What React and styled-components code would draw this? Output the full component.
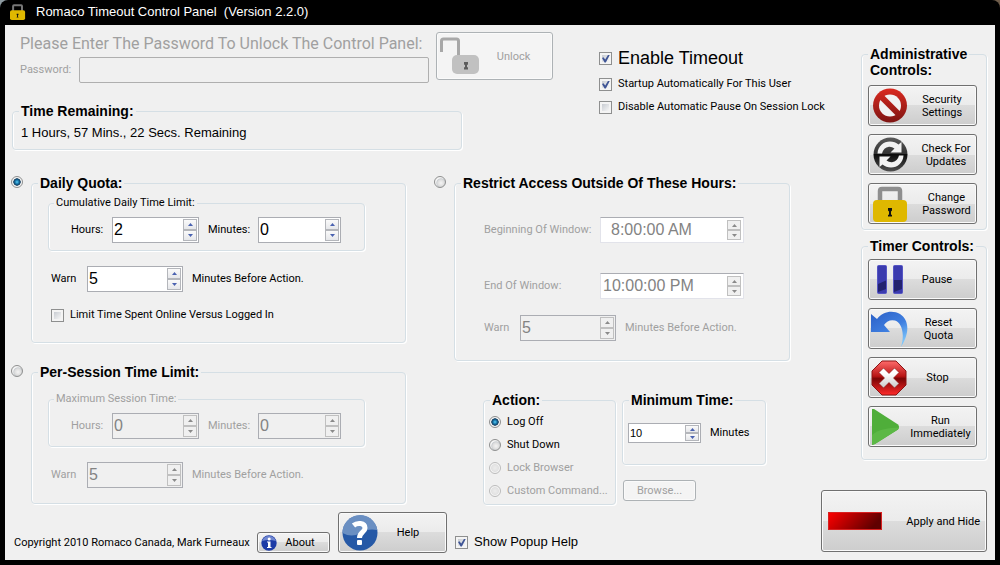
import React from "react";
import styled, { createGlobalStyle, css } from "styled-components";

const GlobalStyle = createGlobalStyle`
  *, *::before, *::after { box-sizing: border-box; }
  body {
    margin: 0;
    background: linear-gradient(90deg, #8d9aa0, #6e5c4a);
    font-family: Roboto, "Liberation Sans", Arial, sans-serif;
    font-size: 11px;
    line-height: 14px;
    color: #000;
  }
`;

const wideFont = css`
  font-family: "Liberation Sans", Arial, sans-serif;
`;

const Window = styled.main`
  min-height: 100vh;
  display: flex;
  flex-direction: column;
  padding: 0 5px 5px;
  background: #000;
  border-radius: 8px 8px 0 0;
`;

const TitleBar = styled.header`
  display: flex;
  align-items: center;
  gap: 10px;
  height: 25px;
  padding: 0 5px 2px;
  color: #fff;
`;

const Title = styled.h1`
  ${wideFont}
  margin: 0;
  font-size: 13px;
  line-height: 16px;
  font-weight: 400;
  white-space: pre;
`;

const Client = styled.div`
  flex: 1;
  display: flex;
  padding-right: 8px;
  background: #f0f0f0;
`;

const Content = styled.div`
  flex: 1;
  min-width: 0;
  padding: 7px 0 7px 6px;
`;

const TopArea = styled.div`
  display: flex;
  gap: 46px;
  padding-left: 1px;
`;

const TopLeft = styled.div`
  flex: none;
  width: 541px;
`;

const PasswordRow = styled.div`
  display: flex;
  gap: 7px;
  padding-left: 8px;
`;

const PasswordBlock = styled.div`
  flex: 1;
  min-width: 0;
  padding-top: 2px;
`;

const PasswordTitle = styled.h2`
  margin: 0 0 3px;
  font-size: 16px;
  line-height: 20px;
  font-weight: 400;
  color: #a0a0a0;
  white-space: nowrap;
`;

const Row = styled.div`
  display: flex;
  align-items: center;
  padding-left: ${(p) => p.$indent || 0}px;
  margin-top: ${(p) => p.$top || 0}px;
`;

const FieldLabel = styled.label`
  flex: none;
  width: ${(p) => (p.$width ? p.$width + "px" : "auto")};
  padding-left: ${(p) => (p.$after ? 9 : 0)}px;
  color: ${(p) => (p.$off ? "#a0a0a0" : "#000")};
  white-space: nowrap;
`;

const Note = styled.span`
  padding-left: 9px;
  color: ${(p) => (p.$off ? "#a0a0a0" : "#000")};
  white-space: nowrap;
`;

const PasswordInput = styled.input`
  flex: 1;
  min-width: 0;
  height: 26px;
  border: 1px solid #afafaf;
  border-radius: 2px;
  background: #f0f0f0;
`;

const OptionColumn = styled.div`
  display: flex;
  flex-direction: column;
  gap: 9px;
  padding-top: 16px;
`;

const OptionLabel = styled.label`
  display: flex;
  align-items: center;
  gap: 6px;
  height: ${(p) => p.$height || 14}px;
  ${(p) => p.$size && css`${wideFont} font-size: ${p.$size}px;`}
  color: ${(p) => (p.$off ? "#a0a0a0" : "#000")};
  white-space: nowrap;
`;

const Check = styled.input.attrs({ type: "checkbox" })`
  appearance: none;
  flex: none;
  width: 13px;
  height: 13px;
  margin: 0;
  border: 1px solid #8e8f8f;
  background: linear-gradient(135deg, #c8ccd2, #f6f6f6) content-box, #f4f4f4;
  padding: 2px;
  &:checked::before {
    content: "";
    display: block;
    width: 8px;
    height: 8px;
    background: #3f5596;
    clip-path: polygon(0 45%, 18% 35%, 40% 62%, 78% 0, 100% 0, 48% 100%, 32% 100%);
  }
`;

const Radio = styled.input.attrs({ type: "radio" })`
  appearance: none;
  flex: none;
  width: 12px;
  height: 12px;
  margin: 0;
  border: 1px solid #8e8f8f;
  border-radius: 50%;
  background: radial-gradient(circle at 60% 60%, #f4f4f4 0, #dcdcdc 40%, #c8ccd0 50%, #f4f4f4 60%);
  &:checked {
    background: radial-gradient(circle at 50% 50%, #5fd0f4 0, #1c7fb4 24%, #103a5c 48%, #f4f4f4 56%);
  }
  &:disabled {
    border-color: #bcbcbc;
    background: radial-gradient(circle, #ececec 0, #e2e2e2 50%, #f4f4f4 62%);
  }
`;

const Group = styled.fieldset`
  flex: ${(p) => p.$flex || "initial"};
  min-width: 0;
  margin: 0;
  padding: 0;
  border: 1px solid #d5dfe5;
  border-radius: 4px;
  box-shadow: 1px 1px 0 #fff, inset 1px 0 0 #fff;
`;

const GroupBody = styled.div`
  padding: ${(p) => p.$pad};
`;

const Legend = styled.legend`
  ${wideFont}
  height: 16px;
  margin-left: 6px;
  padding: 0 2px;
  background: #f0f0f0;
  font-size: 14px;
  line-height: 16px;
  font-weight: 700;
  white-space: nowrap;
`;

const SmallLegend = styled.legend`
  margin-left: 5px;
  padding: 0 2px;
  background: #f0f0f0;
  color: ${(p) => (p.$off ? "#a0a0a0" : "#000")};
`;

const TimeText = styled.p`
  ${wideFont}
  margin: 0;
  font-size: 13px;
  line-height: 16px;
`;

const Columns = styled.div`
  display: grid;
  grid-template-columns: 395fr 356fr;
  gap: 28px;
  margin: 25px 31px 0 0;
`;

const ModeRow = styled.div`
  display: flex;
  align-items: flex-start;
  gap: 8px;
  margin-bottom: ${(p) => p.$bottom || 0}px;
  & > ${Radio} { margin-top: 1px; }
`;

const SpinFrame = styled.span`
  display: flex;
  flex: none;
  width: ${(p) => p.$width}px;
  height: ${(p) => p.$height || 26}px;
  padding: 1px;
  border: 1px solid ${(p) => (p.$time ? "#e2e3ea" : "#abadb3")};
  ${(p) => p.$time && css`border-top-color: #abadb3; padding: 2px;`}
  background: ${(p) => (p.$off && !p.$time ? "#f0f0f0" : "#fff")};
`;

const SpinInput = styled.input`
  flex: 1;
  min-width: 0;
  padding: 0 0 0 ${(p) => p.$inset || 0}px;
  border: 0;
  background: transparent;
  ${wideFont}
  font-size: ${(p) => p.$size || 16}px;
  color: #000;
  &:disabled { color: #838383; }
`;

const SpinButtons = styled.span`
  display: grid;
  grid-template-rows: 1fr 1fr;
  width: 14px;
`;

const SpinButton = styled.button`
  display: flex;
  align-items: center;
  justify-content: center;
  min-height: 0;
  padding: 0;
  border: 1px solid #b4b6bb;
  background: linear-gradient(#fafafa, #e6e7ea);
  color: #4a62b0;
  &:disabled { color: #8a8a8a; background: #f0f0f0; border-color: #c0c0c0; }
`;

const Button = styled.button`
  display: flex;
  align-items: center;
  flex: none;
  gap: ${(p) => p.$gap || 0}px;
  width: ${(p) => p.$width}px;
  height: ${(p) => p.$height}px;
  padding: 0 ${(p) => p.$right || 0}px 0 ${(p) => p.$left || 0}px;
  border: 1px solid #707070;
  border-radius: 3px;
  background: linear-gradient(#f3f3f3 0, #ebebeb 50%, #dcdcdc 50%, #cdcdcd 100%);
  box-shadow: inset 0 0 0 1px #fafafa;
  font-family: inherit;
  font-size: 11px;
  line-height: 13px;
  color: #000;
  &:disabled {
    border-color: #adb2b5;
    background: #f4f4f4;
    color: #a0a0a0;
  }
  & > svg { flex: none; }
`;

const Caption = styled.span`
  flex: 1;
  text-align: ${(p) => p.$align || "center"};
`;

const LowerRow = styled.div`
  display: flex;
  align-items: flex-start;
  gap: 6px;
  margin: 31px 0 0 49px;
`;

const MinimumColumn = styled.div`
  display: flex;
  flex-direction: column;
  align-items: flex-start;
  gap: 15px;
  width: 144px;
  & > fieldset { width: 100%; }
  & > button { margin-left: 1px; }
`;

const Footer = styled.footer`
  display: flex;
  align-items: flex-end;
  gap: 8px;
  margin-top: 7px;
  padding-left: 3px;
`;

const Copyright = styled.span`
  width: 235px;
  padding-bottom: 3px;
  white-space: nowrap;
`;

const FooterOption = styled.div`
  padding-bottom: 3px;
`;

const Sidebar = styled.aside`
  display: flex;
  flex-direction: column;
  align-items: flex-end;
  flex: none;
  width: 166px;
  padding: 21px 0 8px;
  & > fieldset { width: 126px; }
  & > fieldset + fieldset { margin-top: 8px; }
  & > button { margin-top: auto; }
`;

const ButtonStack = styled.div`
  display: flex;
  flex-direction: column;
  gap: 8px;
`;

function PadlockIcon({ size, body = "#dfb800", shackle = "#8e8e8e" }) {
  return (
    <svg width={size} height={size} viewBox="0 0 36 36" aria-hidden="true">
      <path d="M7 16V5Q7 3 9 3H25Q27 3 27 5V16" fill="none" stroke={shackle} strokeWidth="4.500" />
      <rect x="0" y="14" width="34" height="22" rx="4" fill={body} />
      <path d="M15 22h4v2.500l-1 1v3l1 .5v1.500h-4v-1.500l1-.5v-3l-1-1z" fill="#111" />
    </svg>
  );
}

function OpenPadlockIcon() {
  return (
    <svg width="42" height="38" viewBox="0 0 42 38" aria-hidden="true">
      <path d="M2.500 15V4Q2.500 2 4.500 2H17.500Q19.500 2 19.500 4V20" fill="none" stroke="#a8a8a8" strokeWidth="3" />
      <rect x="13" y="18" width="27" height="19" rx="5" fill="#c1c1c1" />
      <path d="M25 25h4v2.500l-1 .5v2l1 .5v2h-4v-2l1-.5v-2l-1-.5z" fill="#5c5c5c" />
    </svg>
  );
}

function BlockIcon() {
  return (
    <svg width="35" height="35" viewBox="0 0 35 35" aria-hidden="true">
      <defs>
        <linearGradient id="block" gradientUnits="userSpaceOnUse" x1="0" y1="0" x2="0" y2="35">
          <stop offset="0" stopColor="#dc2a20" />
          <stop offset="1" stopColor="#7c1412" />
        </linearGradient>
      </defs>
      <circle cx="17" cy="17.500" r="17" fill="url(#block)" />
      <circle cx="17" cy="17.500" r="11" fill="#f2f2f2" />
      <path d="M8.500 9L25.500 26" stroke="url(#block)" strokeWidth="6" />
    </svg>
  );
}

function UpdateIcon() {
  return (
    <svg width="35" height="35" viewBox="0 0 35 35" aria-hidden="true">
      <defs>
        <linearGradient id="update" x1="0" y1="0" x2="0" y2="1">
          <stop offset="0" stopColor="#5a5a5a" />
          <stop offset=".48" stopColor="#333" />
          <stop offset=".5" stopColor="#0c0c0c" />
          <stop offset="1" stopColor="#505050" />
        </linearGradient>
      </defs>
      <circle cx="17.500" cy="17.500" r="17" fill="url(#update)" />
      <g fill="#f2f2f2">
        <path d="M4.500 16.500C5 9 10.500 4.500 17 4.500Q22 4.500 25.500 7.500L28.500 5V15.500H17.500L21.500 11.500Q19 9.500 16 9.700Q10.500 10.500 9 16.500Z" />
        <path d="M30.500 18.500C30 26 24.500 30.500 18 30.500Q13 30.500 9.500 27.500L6.500 30V19.500H17.500L13.500 23.500Q16 25.500 19 25.300Q24.500 24.500 26 18.500Z" />
      </g>
    </svg>
  );
}

function PauseIcon() {
  return (
    <svg width="35" height="35" viewBox="0 0 35 35" aria-hidden="true">
      <rect x="6.500" y="3.500" width="9" height="28" rx="1" fill="#3b3bae" stroke="#5555c4" />
      <rect x="22.500" y="3.500" width="9" height="28" rx="1" fill="#3b3bae" stroke="#5555c4" />
      <path d="M7 22L15 18.500V27L7 30ZM23 18H31V27L23 30Z" fill="#22226e" />
    </svg>
  );
}

function ResetIcon() {
  return (
    <svg width="38" height="36" viewBox="0 0 38 36" aria-hidden="true">
      <defs>
        <linearGradient id="reset" x1="0" y1="0" x2=".6" y2="1">
          <stop offset="0" stopColor="#2b5fc6" />
          <stop offset=".6" stopColor="#3f7fe0" />
          <stop offset="1" stopColor="#7cc4fa" />
        </linearGradient>
      </defs>
      <path d="M0 3L6 8C12 0 22-1 29 3C37 8 40 20 30 36C34 23 31 12 24 9.500Q17 8 13 14L19 21H0Z" fill="url(#reset)" />
    </svg>
  );
}

function StopIcon() {
  return (
    <svg width="36" height="36" viewBox="0 0 36 36" aria-hidden="true">
      <defs>
        <linearGradient id="stop" x1="0" y1="0" x2="0" y2="1">
          <stop offset="0" stopColor="#ff6a6a" />
          <stop offset=".45" stopColor="#b81414" />
          <stop offset=".52" stopColor="#7a0505" />
          <stop offset="1" stopColor="#ff2a2a" />
        </linearGradient>
        <linearGradient id="cross" x1="0" y1="0" x2="0" y2="1">
          <stop offset=".3" stopColor="#fff" />
          <stop offset="1" stopColor="#c8c8c8" />
        </linearGradient>
      </defs>
      <path d="M11 1H25L35 11V25L25 35H11L1 25V11Z" fill="url(#stop)" stroke="#8a1414" />
      <path d="M12.500 8L18 13.500L23.500 8L28 12.500L22.500 18L28 23.500L23.500 28L18 22.500L12.500 28L8 23.500L13.500 18L8 12.500Z" fill="url(#cross)" stroke="#8c1010" strokeWidth=".6" />
    </svg>
  );
}

function RunIcon() {
  return (
    <svg width="30" height="36" viewBox="0 0 30 36" aria-hidden="true">
      <path d="M1 0H3L27 15.500Q29 18 27 20.500L4 35L1 36Z" fill="#4fae3a" />
      <path d="M1 26C8 20 18 19 28 18.500L27 20.500L4 35L1 36Z" fill="#5cb846" />
    </svg>
  );
}

function HelpIcon() {
  return (
    <svg width="36" height="36" viewBox="0 0 36 36" aria-hidden="true">
      <circle cx="18" cy="18" r="17.500" fill="#2659a6" />
      <path d="M.5 18A17.500 17.500 0 0 1 35.300 15Q26 13 18 18T.5 18Z" fill="#6a8fc2" />
      <path d="M11.500 10.500C15 7.500 23 7.500 23 13C23 17.500 17.500 17 17.500 23" fill="none" stroke="#fff" strokeWidth="5" />
      <rect x="15" y="25" width="5" height="5" rx="1" fill="#fff" />
    </svg>
  );
}

function InfoIcon() {
  return (
    <svg width="16" height="16" viewBox="0 0 16 16" aria-hidden="true">
      <circle cx="8" cy="8" r="7.700" fill="#1c3aa6" />
      <path d="M1 6Q3 1 8 1T15 6Q8 4 1 6Z" fill="#6f86d0" />
      <path d="M6 6.500H9.500V12H10.500V13H6V12H7V7.500H6Z" fill="#fff" />
      <circle cx="8.200" cy="4" r="1.500" fill="#fff" />
    </svg>
  );
}

function RedBarIcon() {
  return (
    <svg width="54" height="18" viewBox="0 0 54 18" aria-hidden="true">
      <defs>
        <linearGradient id="bar" x1="0" y1="0" x2="1" y2=".3">
          <stop offset="0" stopColor="#ff0000" />
          <stop offset="1" stopColor="#600000" />
        </linearGradient>
      </defs>
      <rect x=".5" y=".5" width="53" height="17" fill="url(#bar)" stroke="#d82020" />
    </svg>
  );
}

function Arrow({ down }) {
  return (
    <svg width="5" height="3" viewBox="0 0 5 3" aria-hidden="true">
      <path d={down ? "M0 0H5L2.500 3Z" : "M0 3H5L2.500 0Z"} fill="currentColor" />
    </svg>
  );
}

function Spinner({ id, value, width, height, size, inset, off, time, label }) {
  return (
    <SpinFrame $width={width} $height={height} $off={off} $time={time}>
      <SpinInput id={id} type="text" defaultValue={value} disabled={off} $size={size} $inset={inset} />
      <SpinButtons>
        <SpinButton type="button" disabled={off} aria-label={`Increase ${label}`}><Arrow /></SpinButton>
        <SpinButton type="button" disabled={off} aria-label={`Decrease ${label}`}><Arrow down /></SpinButton>
      </SpinButtons>
    </SpinFrame>
  );
}

function LimitGroup({ prefix, title, hours, off }) {
  return (
    <Group>
      <SmallLegend $off={off}>{title}</SmallLegend>
      <GroupBody $pad="7px 0 7px 22px">
        <Row>
          <FieldLabel htmlFor={`${prefix}-hours`} $width={41} $off={off}>Hours:</FieldLabel>
          <Spinner id={`${prefix}-hours`} value={hours} width={87} off={off} label="hours" />
          <FieldLabel htmlFor={`${prefix}-minutes`} $width={59} $after $off={off}>Minutes:</FieldLabel>
          <Spinner id={`${prefix}-minutes`} value="0" width={83} off={off} label="minutes" />
        </Row>
      </GroupBody>
    </Group>
  );
}

function WarnRow({ id, top, indent, off }) {
  return (
    <Row $top={top} $indent={indent}>
      <FieldLabel htmlFor={id} $width={36} $off={off}>Warn</FieldLabel>
      <Spinner id={id} value="5" width={96} off={off} label="warning minutes" />
      <Note $off={off}>Minutes Before Action.</Note>
    </Row>
  );
}

const actions = [
  { text: "Log Off", on: true },
  { text: "Shut Down" },
  { text: "Lock Browser", off: true },
  { text: "Custom Command...", off: true },
];

export default function App() {
  return (
    <Window>
      <GlobalStyle />
      <TitleBar>
        <PadlockIcon size={16} shackle="#777" />
        <Title>Romaco Timeout Control Panel  (Version 2.2.0)</Title>
      </TitleBar>
      <Client>
        <Content>
          <TopArea>
            <TopLeft>
              <PasswordRow>
                <PasswordBlock>
                  <PasswordTitle>Please Enter The Password To Unlock The Control Panel:</PasswordTitle>
                  <Row>
                    <FieldLabel htmlFor="password" $width={59} $off>Password:</FieldLabel>
                    <PasswordInput id="password" type="password" disabled />
                  </Row>
                </PasswordBlock>
                <Button type="button" disabled $width={117} $height={48} $left={2} $right={6}>
                  <OpenPadlockIcon />
                  <Caption>Unlock</Caption>
                </Button>
              </PasswordRow>
              <Row $top={20}>
                <Group $flex="0 0 450px">
                  <Legend>Time Remaining:</Legend>
                  <GroupBody $pad="6px 8px 8px">
                    <TimeText>1 Hours, 57 Mins., 22 Secs. Remaining</TimeText>
                  </GroupBody>
                </Group>
              </Row>
            </TopLeft>
            <OptionColumn>
              <OptionLabel $size={18} $height={20}><Check defaultChecked />Enable Timeout</OptionLabel>
              <OptionLabel><Check defaultChecked />Startup Automatically For This User</OptionLabel>
              <OptionLabel><Check />Disable Automatic Pause On Session Lock</OptionLabel>
            </OptionColumn>
          </TopArea>

          <Columns>
            <div>
              <ModeRow $bottom={21}>
                <Radio name="mode" defaultChecked aria-label="Daily Quota" />
                <Group $flex="1">
                  <Legend>Daily Quota:</Legend>
                  <GroupBody $pad="5px 40px 20px 16px">
                    <LimitGroup prefix="daily" title="Cumulative Daily Time Limit:" hours="2" />
                    <WarnRow id="daily-warn" top={15} indent={3} />
                    <Row $top={16} $indent={3}>
                      <OptionLabel><Check />Limit Time Spent Online Versus Logged In</OptionLabel>
                    </Row>
                  </GroupBody>
                </Group>
              </ModeRow>
              <ModeRow>
                <Radio name="mode" aria-label="Per-Session Time Limit" />
                <Group $flex="1">
                  <Legend>Per-Session Time Limit:</Legend>
                  <GroupBody $pad="12px 40px 15px 16px">
                    <LimitGroup prefix="session" title="Maximum Session Time:" hours="0" off />
                    <WarnRow id="session-warn" top={15} indent={3} off />
                  </GroupBody>
                </Group>
              </ModeRow>
            </div>

            <div>
              <ModeRow>
                <Radio name="mode" aria-label="Restrict Access Outside Of These Hours" />
                <Group $flex="1">
                  <Legend>Restrict Access Outside Of These Hours:</Legend>
                  <GroupBody $pad="26px 0 19px 29px">
                    <Row>
                      <FieldLabel htmlFor="begin" $width={116} $off>Beginning Of Window:</FieldLabel>
                      <Spinner id="begin" value="8:00:00 AM" width={144} inset={8} off time label="beginning" />
                    </Row>
                    <Row $top={30}>
                      <FieldLabel htmlFor="end" $width={116} $off>End Of Window:</FieldLabel>
                      <Spinner id="end" value="10:00:00 PM" width={144} off time label="end" />
                    </Row>
                    <WarnRow id="window-warn" top={16} indent={0} off />
                  </GroupBody>
                </Group>
              </ModeRow>
              <LowerRow>
                <Group $flex="0 0 133px">
                  <Legend>Action:</Legend>
                  <GroupBody $pad="2px 5px">
                    {actions.map((a) => (
                      <OptionLabel key={a.text} $height={23} $off={a.off}>
                        <Radio name="action" defaultChecked={a.on} disabled={a.off} />
                        {a.text}
                      </OptionLabel>
                    ))}
                  </GroupBody>
                </Group>
                <MinimumColumn>
                  <Group>
                    <Legend>Minimum Time:</Legend>
                    <GroupBody $pad="15px 5px 21px">
                      <Row>
                        <Spinner id="minimum" value="10" width={73} height={20} size={11} label="minimum time" />
                        <FieldLabel htmlFor="minimum" $after>Minutes</FieldLabel>
                      </Row>
                    </GroupBody>
                  </Group>
                  <Button type="button" disabled $width={73} $height={21}><Caption>Browse...</Caption></Button>
                </MinimumColumn>
              </LowerRow>
            </div>
          </Columns>

          <Footer>
            <Copyright>Copyright 2010 Romaco Canada, Mark Furneaux</Copyright>
            <Button type="button" $width={73} $height={21} $left={3} $right={6}><InfoIcon /><Caption>About</Caption></Button>
            <Button type="button" $width={109} $height={41} $left={3} $right={8}><HelpIcon /><Caption>Help</Caption></Button>
            <FooterOption>
              <OptionLabel $size={13} $height={16}><Check defaultChecked />Show Popup Help</OptionLabel>
            </FooterOption>
          </Footer>
        </Content>

        <Sidebar>
          <Group>
            <Legend>Administrative<br />Controls:</Legend>
            <GroupBody $pad="23px 10px 5px 6px">
              <ButtonStack>
                <Button type="button" $width={109} $height={41} $left={4}><BlockIcon /><Caption>Security<br />Settings</Caption></Button>
                <Button type="button" $width={109} $height={41} $left={4} $gap={8}><UpdateIcon /><Caption>Check For<br />Updates</Caption></Button>
                <Button type="button" $width={109} $height={41} $left={4} $gap={8}><PadlockIcon size={36} /><Caption>Change<br />Password</Caption></Button>
              </ButtonStack>
            </GroupBody>
          </Group>
          <Group>
            <Legend>Timer Controls:</Legend>
            <GroupBody $pad="5px 10px 12px 6px">
              <ButtonStack>
                <Button type="button" $width={109} $height={41} $left={2} $right={8}><PauseIcon /><Caption>Pause</Caption></Button>
                <Button type="button" $width={109} $height={41} $left={2} $right={8}><ResetIcon /><Caption>Reset<br />Quota</Caption></Button>
                <Button type="button" $width={109} $height={41} $left={2} $right={8}><StopIcon /><Caption>Stop</Caption></Button>
                <Button type="button" $width={109} $height={41} $left={2} $gap={4}><RunIcon /><Caption>Run<br />Immediately</Caption></Button>
              </ButtonStack>
            </GroupBody>
          </Group>
          <Button type="button" $width={166} $height={62} $left={6} $right={6}><RedBarIcon /><Caption $align="right">Apply and Hide</Caption></Button>
        </Sidebar>
      </Client>
    </Window>
  );
}
